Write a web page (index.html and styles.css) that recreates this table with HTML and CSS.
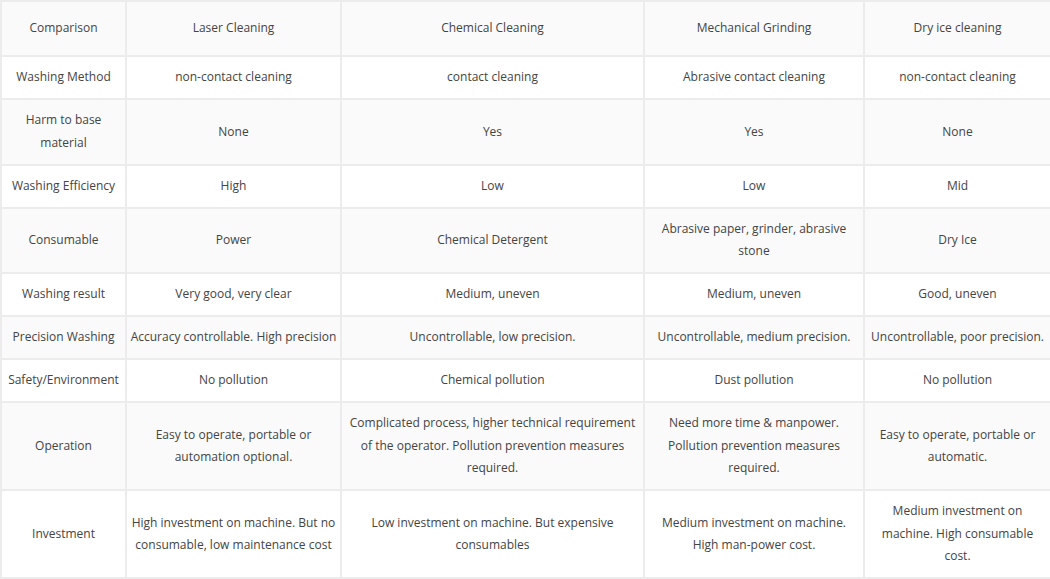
FILE: index.html
```html
<!DOCTYPE html>
<html>
<head>
<meta charset="utf-8">
<link rel="stylesheet" href="styles.css">
</head>
<body>
<table class="cmp">
<colgroup>
<col class="c1"><col class="c2"><col class="c3"><col class="c4"><col class="c5">
</colgroup>
<tr class="head"><td>Comparison</td><td>Laser Cleaning</td><td>Chemical Cleaning</td><td>Mechanical Grinding</td><td>Dry ice cleaning</td></tr>
<tr><td>Washing Method</td><td>non-contact cleaning</td><td>contact cleaning</td><td>Abrasive contact cleaning</td><td>non-contact cleaning</td></tr>
<tr><td>Harm to base material</td><td>None</td><td>Yes</td><td>Yes</td><td>None</td></tr>
<tr><td>Washing Efficiency</td><td>High</td><td>Low</td><td>Low</td><td>Mid</td></tr>
<tr><td>Consumable</td><td>Power</td><td>Chemical Detergent</td><td>Abrasive paper, grinder, abrasive stone</td><td>Dry Ice</td></tr>
<tr><td>Washing result</td><td>Very good, very clear</td><td>Medium, uneven</td><td>Medium, uneven</td><td>Good, uneven</td></tr>
<tr><td>Precision Washing</td><td>Accuracy controllable. High precision</td><td>Uncontrollable, low precision.</td><td>Uncontrollable, medium precision.</td><td>Uncontrollable, poor precision.</td></tr>
<tr><td>Safety/Environment</td><td>No pollution</td><td>Chemical pollution</td><td>Dust pollution</td><td>No pollution</td></tr>
<tr><td>Operation</td><td>Easy to operate, portable or automation optional.</td><td>Complicated process, higher technical requirement of the operator. Pollution prevention measures required.</td><td>Need more time &amp; manpower. Pollution prevention measures required.</td><td>Easy to operate, portable or automatic.</td></tr>
<tr><td>Investment</td><td>High investment on machine. But no consumable, low maintenance cost</td><td>Low investment on machine. But expensive consumables</td><td>Medium investment on machine. High man-power cost.</td><td>Medium investment on machine. High consumable cost.</td></tr>
</table>
</body>
</html>
```
FILE: styles.css
```css
html, body {
  margin: 0;
  padding: 0;
  background: #ffffff;
}
.cmp {
  border-collapse: collapse;
  table-layout: fixed;
  width: 1050px;
  font-family: "Open Sans", "Liberation Sans", sans-serif;
  font-size: 12px;
  line-height: 22.5px;
  color: #444444;
}
.c1 { width: 125px; }
.c2 { width: 215px; }
.c3 { width: 303px; }
.c4 { width: 220px; }
.c5 { width: 187px; }
.cmp td {
  border: 2px solid #ececec;
  text-align: center;
  vertical-align: middle;
  padding: 9.25px 5px;
}
.cmp td:nth-child(2) {
  padding-left: 1px;
  padding-right: 1px;
}
.cmp tr:nth-child(odd) td {
  background: #fafafa;
}
.cmp tr.head td {
  padding-top: 14.5px;
  padding-bottom: 16px;
}
```
